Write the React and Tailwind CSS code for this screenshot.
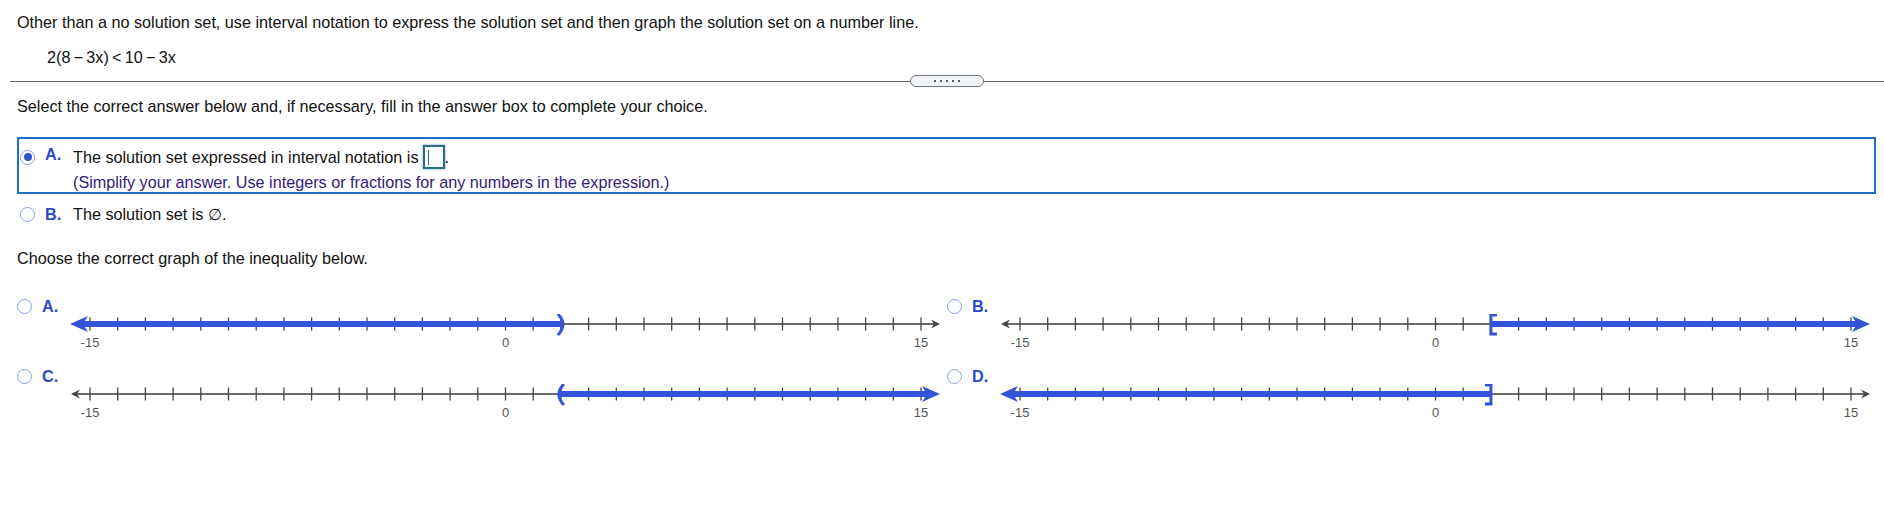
import React from 'react';

const BLUE = '#3354d6';
const pos = (v) => 26 + (v + 15) * 27.7;

const Radio = ({ checked }) => (
  <span className="w-[15px] h-[15px] rounded-full border-[1.5px] border-[#8a9ee4] bg-white flex items-center justify-center shrink-0">
    {checked && <span className="w-[8px] h-[8px] rounded-full bg-[#2f56c9]"></span>}
  </span>
);

const NumberLine = ({ kind }) => {
  const x2 = pos(2);
  const leftBlue = kind === 'A' || kind === 'D';
  const rightBlue = kind === 'B' || kind === 'C';
  const ticks = [];
  for (let v = -15; v <= 15; v++) ticks.push(v);

  return (
    <svg width="885" height="36" viewBox="0 0 885 36" className="block">
      {/* axis */}
      <line x1="10" y1="10" x2="872" y2="10" stroke="#6b6b6b" strokeWidth="2" />
      {ticks.map((v) => (
        <line key={v} x1={pos(v)} y1="3.5" x2={pos(v)} y2="16.5" stroke="#444" strokeWidth="1.3" />
      ))}
      {!leftBlue && <path d="M7 10 L16 5.5 L13 10 L16 14.5 Z" fill="#444" />}
      {!rightBlue && <path d="M876 10 L867 5.5 L870 10 L867 14.5 Z" fill="#444" />}

      {/* solution */}
      {leftBlue && <line x1="18" y1="10" x2={x2} y2="10" stroke={BLUE} strokeWidth="6" />}
      {rightBlue && <line x1={x2} y1="10" x2="864" y2="10" stroke={BLUE} strokeWidth="6" />}
      {leftBlue && <path d="M6 10 L24 2 L19 10 L24 18 Z" fill={BLUE} />}
      {rightBlue && <path d="M876 10 L858 2 L863 10 L858 18 Z" fill={BLUE} />}
      {kind === 'A' && <path d={`M${x2 - 3} 0 Q${x2 + 7} 10.5 ${x2 - 3} 21`} stroke={BLUE} strokeWidth="3" fill="none" />}
      {kind === 'C' && <path d={`M${x2 + 3} 0 Q${x2 - 7} 10.5 ${x2 + 3} 21`} stroke={BLUE} strokeWidth="3" fill="none" />}
      {kind === 'B' && <path d={`M${x2 + 6} 1 L${x2} 1 L${x2} 20 L${x2 + 6} 20`} stroke={BLUE} strokeWidth="3" fill="none" />}
      {kind === 'D' && <path d={`M${x2 - 6} 1 L${x2} 1 L${x2} 20 L${x2 - 6} 20`} stroke={BLUE} strokeWidth="3" fill="none" />}

      {[-15, 0, 15].map((v) => (
        <text key={v} x={pos(v)} y="33" textAnchor="middle" fontSize="13" fill="#555" fontFamily="'Liberation Sans', Arial, sans-serif">
          {v}
        </text>
      ))}
    </svg>
  );
};

const GraphChoice = ({ letter }) => (
  <div>
    <div className="flex items-center h-[16px]">
      <Radio />
      <span className="ml-[10px] font-bold text-[#2b4cc4]">{letter}.</span>
    </div>
    <div className="ml-[47px]">
      <NumberLine kind={letter} />
    </div>
  </div>
);

export default function App() {
  return (
    <div className="w-[1884px] h-[519px] bg-white text-[16.2px] text-[#111] overflow-hidden" style={{ fontFamily: "'Liberation Sans', Arial, sans-serif" }}>
      <div className="pl-[17px] pt-[13px]">
        <p className="leading-[18px]">
          Other than a no solution set, use interval notation to express the solution set and then graph the solution set on a number line.
        </p>
        <p className="leading-[18px] mt-[17px] ml-[30px]">2(8&thinsp;−&thinsp;3x)&thinsp;&lt;&thinsp;10&thinsp;−&thinsp;3x</p>
      </div>

      {/* divider */}
      <div className="flex items-center ml-[10px] mt-[9px] h-[12px]">
        <div className="flex-1 h-px bg-[#636b75]"></div>
        <div className="w-[74px] h-[12px] rounded-full border-[1.5px] border-[#6b7280] bg-[#f1f3f5] flex items-center justify-center gap-[4px]">
          {[0, 1, 2, 3, 4].map((i) => (
            <span key={i} className="w-[2px] h-[2px] bg-[#555]"></span>
          ))}
        </div>
        <div className="flex-1 h-px bg-[#636b75]"></div>
      </div>

      <div className="pl-[17px] pr-[8px]">
        <p className="leading-[18px] mt-[10px]">
          Select the correct answer below and, if necessary, fill in the answer box to complete your choice.
        </p>

        {/* option A (selected) */}
        <div className="mt-[22px] border-2 border-[#1e70c6] pl-[1px] pt-[6px] pb-[1px]">
          <div className="flex items-center h-[24px]">
            <Radio checked />
            <span className="ml-[10px] w-[28px] font-bold text-[#2b4cc4] self-start leading-[18px]">A.</span>
            <span>The solution set expressed in interval notation is</span>
            <span className="ml-[4px] w-[22px] h-[24px] border-2 border-[#2b6d86] shadow-[0_0_2px_#5a9ab5] flex items-center pl-[3px]">
              <span className="w-px h-[15px] bg-[#2c5fd0]"></span>
            </span>
            <span>.</span>
          </div>
          <div className="leading-[18px] mt-[4px] ml-[53px] text-[#33207c]">
            (Simplify your answer. Use integers or fractions for any numbers in the expression.)
          </div>
        </div>

        {/* option B */}
        <div className="mt-[9px] border-2 border-transparent pl-[1px]">
          <div className="flex items-center h-[18px]">
            <Radio />
            <span className="ml-[10px] w-[28px] font-bold text-[#2b4cc4]">B.</span>
            <span>The solution set is ∅.</span>
          </div>
        </div>

        <p className="leading-[18px] mt-[24px]">Choose the correct graph of the inequality below.</p>

        {/* graphs */}
        <div className="grid grid-cols-[930px_1fr] gap-y-[18px] mt-[31px]">
          <GraphChoice letter="A" />
          <GraphChoice letter="B" />
          <GraphChoice letter="C" />
          <GraphChoice letter="D" />
        </div>
      </div>
    </div>
  );
}
